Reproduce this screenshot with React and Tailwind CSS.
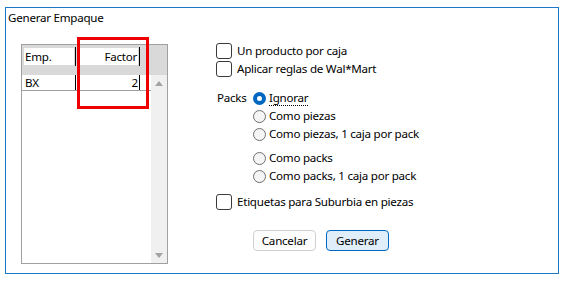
import React from 'react';

const font = { fontFamily: '"Noto Sans", "Open Sans", sans-serif' };

function Check({ label }) {
  return (
    <div className="flex h-[18px] items-center">
      <span className="h-[16px] w-[16px] rounded-[3px] border border-[#3a3a3a] bg-white" />
      <span className="ml-[5px]">{label}</span>
    </div>
  );
}

function Radio({ label, checked, focus }) {
  return (
    <div className="flex h-[18px] items-center">
      {checked ? (
        <span className="flex h-[13px] w-[13px] items-center justify-center rounded-full bg-[#0067c0]">
          <span className="h-[5px] w-[5px] rounded-full bg-white" />
        </span>
      ) : (
        <span className="h-[13px] w-[13px] rounded-full border border-[#6e6e6e] bg-[#f5f5f5]" />
      )}
      <span className={focus ? 'ml-[3px] border-b border-dotted border-black leading-[14px]' : 'ml-[3px]'}>{label}</span>
    </div>
  );
}

function Grid() {
  return (
    <div className="relative mt-[18px] ml-[15px] flex h-[220px] w-[147px] flex-col border border-[#a0a0a0] bg-white">
      <div className="flex h-[30px] shrink-0 bg-[#d9d9d9] pt-[3px] pl-[2px]">
        <div className="flex h-[17px] w-[50px] items-center bg-white pl-[1px]">Emp.</div>
        <div className="mt-[-1px] ml-[1px] h-[19px] w-px bg-black" />
        <div className="ml-[3px] flex h-[17px] w-[59px] items-center justify-end bg-white pr-[1px]">Factor</div>
        <div className="mt-[-1px] ml-px h-[19px] w-px bg-black" />
      </div>
      <div className="flex flex-1">
        <div className="w-[129px]">
          <div className="flex h-[16px] border-b border-[#a0a0a0]">
            <div className="flex w-[53px] items-center pl-[3px]">BX</div>
            <div className="h-full w-px bg-black" />
            <div className="flex w-[62px] items-center justify-end">2</div>
            <div className="ml-px h-full w-px bg-black" />
          </div>
        </div>
        <div className="flex w-[16px] flex-col items-center justify-between bg-[#f0f0f0] pt-[6px] pb-[5px]">
          <span className="h-0 w-0 border-x-[4px] border-b-[5px] border-x-transparent border-b-[#a3a3a3]" />
          <span className="h-0 w-0 border-x-[4px] border-t-[5px] border-x-transparent border-t-[#a3a3a3]" />
        </div>
      </div>
      <div className="absolute top-[-8px] left-[55px] h-[72px] w-[72px] border-[3px] border-[#ee0000]" />
    </div>
  );
}

export default function App() {
  return (
    <div className="h-[288px] w-[564px] bg-white pt-[7px] pl-[5px] text-[11.6px] tracking-[-0.25px] text-black" style={font}>
      <div className="h-[267px] w-[554px] border border-[#1a78c9] bg-white">
        <div className="pt-[2px] pl-[2px] leading-[16px]">Generar Empaque</div>
        <div className="flex">
          <Grid />
          <div className="mt-[16px] ml-[48px] flex flex-col">
            <Check label="Un producto por caja" />
            <Check label="Aplicar reglas de Wal*Mart" />
            <div className="mt-[11px] flex">
              <div className="flex h-[18px] w-[37px] items-center pl-px">Packs</div>
              <div className="flex flex-col">
                <Radio label="Ignorar" checked focus />
                <Radio label="Como piezas" />
                <Radio label="Como piezas, 1 caja por pack" />
                <div className="mt-[6px]">
                  <Radio label="Como packs" />
                </div>
                <Radio label="Como packs, 1 caja por pack" />
              </div>
            </div>
            <div className="mt-[8px]">
              <Check label="Etiquetas para Suburbia en piezas" />
            </div>
            <div className="mt-[19px] ml-[37px] flex gap-[10px]">
              <button className="h-[21px] w-[63px] rounded-[4px] border border-[#d0d0d0] bg-[#fdfdfd] leading-none">Cancelar</button>
              <button className="h-[21px] w-[63px] rounded-[4px] border border-[#0067c0] bg-[#e0eef9] leading-none">Generar</button>
            </div>
          </div>
        </div>
      </div>
    </div>
  );
}
